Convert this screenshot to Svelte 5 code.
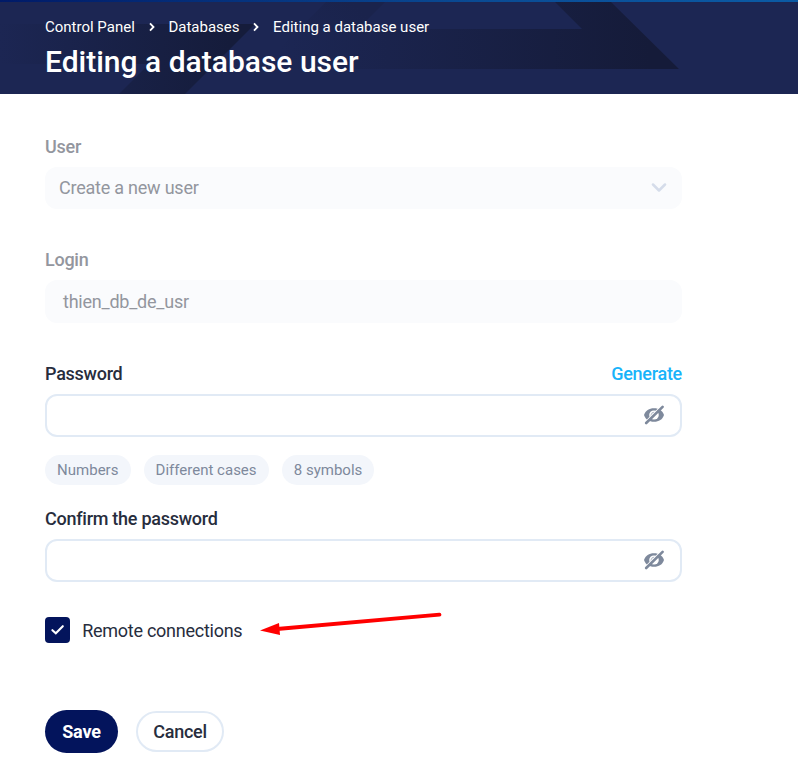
<script>
  const crumbs = ['Control Panel', 'Databases', 'Editing a database user'];
  const rules = ['Numbers', 'Different cases', '8 symbols'];
  let remote = $state(true);
</script>

{#snippet hiddenEye()}
  <svg class="eye" width="22" height="20" viewBox="0 0 22 20" aria-hidden="true">
    <path d="M1 10C2.5 5.5 6 3.2 11 3.2S19.5 5.5 21 10C19.5 14.5 16 16.8 11 16.8S2.5 14.5 1 10Z" fill="#7e899c" />
    <ellipse cx="11" cy="10" rx="4.8" ry="4.5" fill="#fff" />
    <path d="M8.3 11.5A3 3 0 0 1 11.5 7.4" fill="none" stroke="#b5bcc8" stroke-width="1.1" />
    <path d="M2.2 17L18.4 .8" stroke="#fff" stroke-width="1.2" />
    <path d="M3.2 18L19.6 1.8" stroke="#7e899c" stroke-width="2.6" stroke-linecap="round" />
  </svg>
{/snippet}

<header>
  <svg class="pattern" width="798" height="92" viewBox="0 2 798 92" aria-hidden="true">
    <defs>
      <linearGradient id="left-band" gradientUnits="userSpaceOnUse" x1="0" y1="0" x2="230" y2="0">
        <stop offset="0" stop-color="#1c2653" /><stop offset="1" stop-color="#151c3b" />
      </linearGradient>
      <linearGradient id="right-band" gradientUnits="userSpaceOnUse" x1="290" y1="0" x2="650" y2="0">
        <stop offset="0" stop-color="#1c2653" /><stop offset="1" stop-color="#151b39" />
      </linearGradient>
      <linearGradient id="ray" gradientUnits="userSpaceOnUse" x1="350" y1="0" x2="290" y2="60">
        <stop offset="0" stop-color="#1a234c" /><stop offset="1" stop-color="#1c2653" />
      </linearGradient>
    </defs>
    <path d="M326 2H385L318 69H259Z" fill="url(#ray)" />
    <path d="M0 24H255L185 94H119L149 64H0Z" fill="url(#left-band)" />
    <path d="M290 29H582L555 2H611L679 69H290Z" fill="url(#right-band)" />
  </svg>
  <nav>
    {#each crumbs as crumb, i}
      {#if i}
        <svg width="6" height="10" viewBox="0 0 6 10" aria-hidden="true"><path d="M1 1.4L4.5 5L1 8.6" fill="none" stroke="#fff" stroke-width="1.8" /></svg>
      {/if}
      <span>{crumb}</span>
    {/each}
  </nav>
  <h1>Editing a database user</h1>
</header>

<main>
  <div class="label muted">User</div>
  <div class="disabled select">
    <span>Create a new user</span>
    <svg width="16" height="10" viewBox="0 0 16 10" aria-hidden="true"><path d="M2 1.5L8 7.5L14 1.5" fill="none" stroke="#d5dcea" stroke-width="2.5" stroke-linecap="round" stroke-linejoin="round" /></svg>
  </div>
  <div class="label muted login-label">Login</div>
  <div class="disabled login">thien_db_de_usr</div>

  <div class="label password-label"><span>Password</span><span class="generate">Generate</span></div>
  <div class="field"><input type="password" aria-label="Password" />{@render hiddenEye()}</div>
  <div class="rules">
    {#each rules as rule}<span>{rule}</span>{/each}
  </div>
  <div class="label confirm-label">Confirm the password</div>
  <div class="field"><input type="password" aria-label="Confirm the password" />{@render hiddenEye()}</div>

  <div class="remote">
    <button class="box" role="checkbox" aria-checked={remote} aria-label="Remote connections" onclick={() => (remote = !remote)}>
      {#if remote}<svg width="15" height="12" viewBox="0 0 15 12" aria-hidden="true"><path d="M2.4 6.2L5.8 9.2L12.8 2.2" fill="none" stroke="#fff" stroke-width="2.1" stroke-linecap="round" /></svg>{/if}
    </button>
    <span class="remote-text">Remote connections</span>
    <svg class="arrow" width="184" height="28" viewBox="259 609 184 28" aria-hidden="true">
      <path d="M277 629L439.5 614.7" stroke="#f00" stroke-width="3.8" stroke-linecap="round" />
      <path d="M260 630.5L279 623L280 635Z" fill="#f00" />
    </svg>
  </div>
  <div class="actions">
    <button class="save">Save</button>
    <button class="cancel">Cancel</button>
  </div>
</main>

<style>
  :global(body) { margin: 0; background: #fff; font-family: Roboto, "Liberation Sans", sans-serif; }
  header { position: relative; box-sizing: border-box; height: 94px; padding: 15px 45px 0; background: #1c2653; border-top: 2px solid; border-image: linear-gradient(90deg, #001a68, #0a4b94 60%, #0b5ba5) 1; color: #fff; }
  .pattern { position: absolute; left: 0; top: 0; }
  nav { position: relative; display: flex; align-items: center; gap: 13.8px; height: 20px; font-size: 15px; line-height: 20px; white-space: nowrap; }
  h1 { position: relative; margin: 7px 0 0; font-size: 30px; line-height: 36px; font-weight: 500; }
  main { padding: 42px 0 0 45px; width: 637px; color: #272d3d; font-size: 18px; letter-spacing: -0.26px; }
  .label { height: 22px; line-height: 22px; font-weight: 500; margin-bottom: 9px; }
  .muted { color: #93969e; }
  .disabled { box-sizing: border-box; height: 42px; border-radius: 12px; background: #fafbfd; color: #93969e; display: flex; align-items: center; letter-spacing: -0.23px; }
  .select { justify-content: space-between; padding: 0 15px 0 14px; }
  .select span { margin-top: -2px; }
  .login-label { margin-top: 40px; }
  .login { padding-left: 18px; height: 43px; }
  .password-label { display: flex; justify-content: space-between; margin-top: 40px; }
  .generate { color: #18b3fa; }
  .field { box-sizing: border-box; height: 43px; border: 2px solid #e1eaf5; border-radius: 12px; display: flex; align-items: center; padding: 0 15px 0 12px; }
  .eye { margin-top: -1px; }
  input { flex: 1; min-width: 0; border: 0; outline: 0; background: none; font: inherit; }
  .rules { display: flex; gap: 13px; margin-top: 18px; }
  .rules span { height: 30px; line-height: 30px; padding: 0 12.1px; border-radius: 15px; background: #f3f6fb; color: #7e899c; font-size: 15px; letter-spacing: 0; }
  .confirm-label { margin-top: 23px; }
  .remote { display: flex; align-items: center; height: 27px; margin-top: 35px; }
  button { font-family: inherit; padding: 0; }
  .box { width: 25px; height: 26px; margin-top: -1px; display: flex; align-items: center; justify-content: center; border: 0; border-radius: 4px; background: #03145c; }
  .remote-text { margin-left: 12.2px; width: 176.8px; line-height: 27px; white-space: nowrap; }
  .arrow { margin-top: -15px; }
  .actions { display: flex; align-items: center; gap: 18px; margin-top: 66px; }
  .save, .cancel { box-sizing: border-box; font-size: 18px; font-weight: 500; }
  .save { width: 73px; height: 43px; border: 0; border-radius: 22px; background: #03145c; color: #fff; font-weight: 700; letter-spacing: -0.2px; }
  .cancel { width: 88px; height: 41px; border: 2px solid #e1eaf5; border-radius: 21px; background: #fff; color: #272d3d; letter-spacing: -0.24px; }
</style>
